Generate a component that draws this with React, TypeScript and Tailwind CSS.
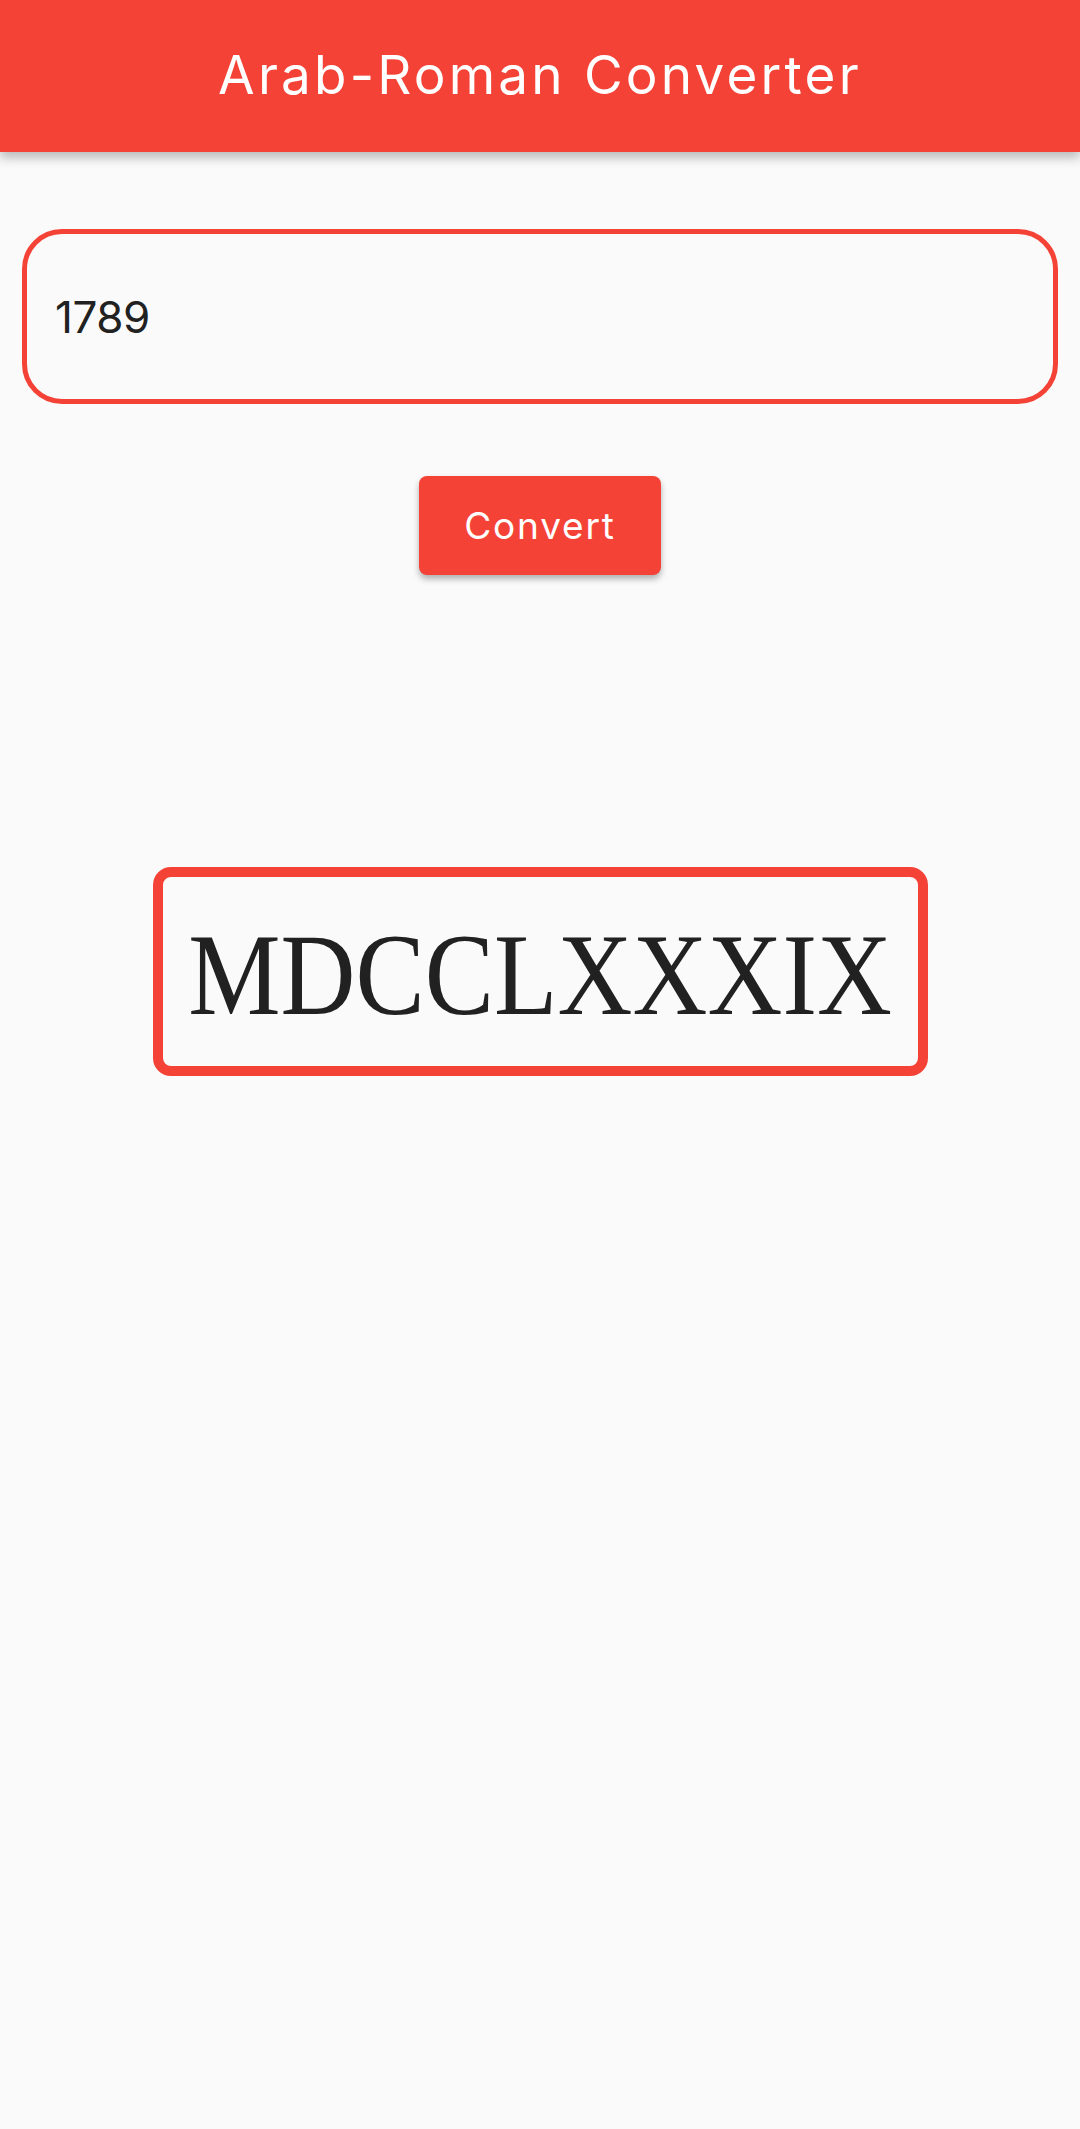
export default function App() {
  return (
    <div className="min-h-[2129px] bg-[#fafafa] font-['Inter',sans-serif]">
      <header className="h-[152px] bg-[#f44336] flex items-center justify-center shadow-[0_6px_10px_rgba(0,0,0,0.25)]">
        <h1 className="text-white text-[53px] font-normal tracking-[3.2px]">Arab-Roman Converter</h1>
      </header>

      <main className="flex flex-col items-center pt-[77px]">
        <div className="w-[1036px] h-[175px] border-[5px] border-[#f44336] rounded-[40px] flex items-center px-[28px]">
          <span className="text-[#212121] text-[44px] leading-none tracking-[-0.5px]">1789</span>
        </div>

        <button className="mt-[72px] w-[242px] h-[99px] bg-[#f44336] rounded-[8px] text-white text-[37px] tracking-[1.8px] shadow-[0_4px_6px_rgba(0,0,0,0.3)]">
          Convert
        </button>

        <div className="mt-[292px] w-[775px] h-[209px] border-[10px] border-[#f44336] rounded-[18px] flex items-center justify-center">
          <span className="inline-block scale-x-[0.895] text-[#212121] text-[116px] leading-none font-['Liberation_Serif',serif] pt-[6px]">
            MDCCLXXXIX
          </span>
        </div>
      </main>
    </div>
  );
}
